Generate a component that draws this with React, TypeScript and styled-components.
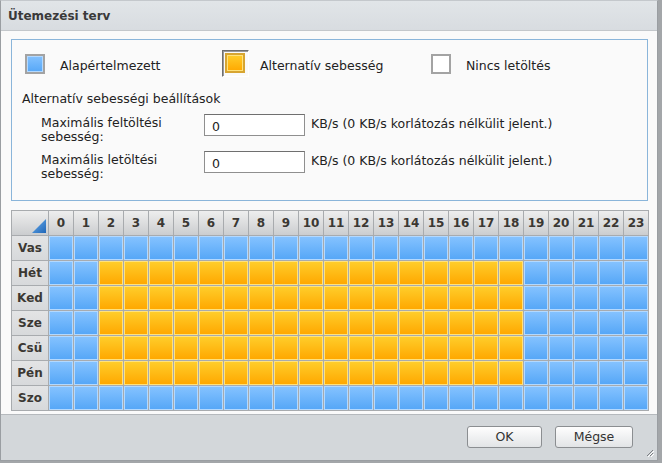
import * as React from 'react'
import styled, { createGlobalStyle } from 'styled-components'

const days = ['Vas', 'Hét', 'Ked', 'Sze', 'Csü', 'Pén', 'Szo']
const hours = Array.from({ length: 24 }, (_, i) => i)

// weekdays 2..18 use the alternative speed
const isAlt = (d: number, h: number) => d >= 1 && d <= 5 && h >= 2 && h <= 18

const GlobalStyle = createGlobalStyle`
  html, body {
    margin: 0;
    padding: 0;
    background: #a3a6a9;
  }
  body {
    font-family: "DejaVu Sans", Verdana, sans-serif;
    font-size: 12.5px;
    color: #333;
  }
  * { box-sizing: border-box; }
`

const App: React.FC = () => {
  return (
    <>
      <GlobalStyle />
      <Window>
        <TitleBar>Ütemezési terv</TitleBar>
        <Body>
          <Panel>
            <Legend>
              <LegendItem $width={200}>
                <Swatch $mode="base" />
                <LegendText>Alapértelmezett</LegendText>
              </LegendItem>
              <LegendItem $width={206}>
                <SwatchFrame>
                  <Swatch $mode="alt" />
                </SwatchFrame>
                <LegendText>Alternatív sebesség</LegendText>
              </LegendItem>
              <LegendItem>
                <Swatch $mode="none" />
                <LegendText>Nincs letöltés</LegendText>
              </LegendItem>
            </Legend>
            <SectionTitle>Alternatív sebességi beállítások</SectionTitle>
            <FormRow>
              <FieldLabel>
                Maximális feltöltési
                <br />
                sebesség:
              </FieldLabel>
              <SpeedInput defaultValue="0" />
              <Hint>KB/s (0 KB/s korlátozás nélkülit jelent.)</Hint>
            </FormRow>
            <FormRow>
              <FieldLabel>
                Maximális letöltési
                <br />
                sebesség:
              </FieldLabel>
              <SpeedInput defaultValue="0" />
              <Hint>KB/s (0 KB/s korlátozás nélkülit jelent.)</Hint>
            </FormRow>
          </Panel>
          <Schedule>
            <HeadCell $corner>
              <svg width="14" height="14" viewBox="0 0 14 14">
                <defs>
                  <linearGradient id="tri" x1="0" y1="0" x2="1" y2="1">
                    <stop offset="0" stopColor="#6fb2ee" />
                    <stop offset="1" stopColor="#1f66b8" />
                  </linearGradient>
                </defs>
                <polygon points="14,0 14,14 0,14" fill="url(#tri)" />
              </svg>
            </HeadCell>
            {hours.map((h) => (
              <HeadCell key={h}>{h}</HeadCell>
            ))}
            {days.map((d, di) => (
              <React.Fragment key={d}>
                <DayCell>{d}</DayCell>
                {hours.map((h) => (
                  <Slot key={h} $mode={isAlt(di, h) ? 'alt' : 'base'} />
                ))}
              </React.Fragment>
            ))}
          </Schedule>
        </Body>
        <Footer>
          <Button $width={75}>OK</Button>
          <Button $width={78}>Mégse</Button>
          <Grip>
            <svg width="10" height="10" viewBox="0 0 10 10">
              <path d="M9 3 L3 9 M9 6 L6 9" stroke="#7a7e82" strokeWidth="1" />
              <path d="M10 4 L4 10 M10 7 L7 10" stroke="#ffffff" strokeWidth="1" />
            </svg>
          </Grip>
        </Footer>
      </Window>
    </>
  )
}

export default App

type Mode = 'base' | 'alt' | 'none'

const fills: Record<Mode, string> = {
  base: 'linear-gradient(#84c2ff, #56a7f7)',
  alt: 'linear-gradient(#ffcd2a, #ffa800)',
  none: '#ffffff',
}

const edges: Record<Mode, string> = {
  base: '#b3d9ff',
  alt: '#ffe27c',
  none: '#ffffff',
}

const Window = styled.div`
  width: 658px;
  height: 461px;
  border: 1px solid #9a9ea2;
  border-top-color: #c4c8cc;
  display: flex;
  flex-direction: column;
  background: #fafafa;
  position: relative;
`

const TitleBar = styled.div`
  height: 30px;
  flex-shrink: 0;
  padding-left: 7px;
  display: flex;
  align-items: center;
  background: linear-gradient(#e1e5e8, #d8dce0);
  border-bottom: 1px solid #c3c7cb;
  font-weight: bold;
  font-size: 12px;
  color: #3a3a3a;
`

const Body = styled.div`
  flex: 1;
  padding: 8px 9px 0 10px;
  background: #fafafa;
`

const Panel = styled.div`
  height: 162px;
  border: 1px solid #8ab5da;
  padding: 10px 12px 0 13px;
`

const Legend = styled.div`
  display: flex;
  align-items: center;
  height: 27px;
`

const LegendItem = styled.div<{ $width?: number }>`
  display: flex;
  align-items: center;
  width: ${(p) => (p.$width ? `${p.$width}px` : 'auto')};
`

const Swatch = styled.div<{ $mode: Mode }>`
  width: 20px;
  height: 20px;
  border: 2px solid ${(p) => (p.$mode === 'alt' ? '#d7a531' : '#a3a3a3')};
  background: ${(p) => fills[p.$mode]};
  box-shadow: inset 0 0 0 1px ${(p) => edges[p.$mode]};
  flex-shrink: 0;
`

const SwatchFrame = styled.div`
  margin: -4px -4px -3px -3px;
  padding: 2px 3px 3px 2px;
  border: 1px solid;
  border-color: #6e6e6e #ffffff #ffffff #6e6e6e;
  box-shadow: inset 1px 1px 0 #9a9a9a;
`

const LegendText = styled.span`
  margin-left: 15px;
  padding-top: 4px;
  color: #222;
`

const SectionTitle = styled.div`
  margin-top: 14px;
  margin-left: -3px;
  line-height: 15px;
  color: #222;
`

const FormRow = styled.div`
  display: flex;
  align-items: flex-start;
  margin-top: 8px;
  margin-left: 16px;

  & + & {
    margin-top: 7px;
  }
`

const FieldLabel = styled.div`
  width: 163px;
  padding-top: 2px;
  line-height: 14px;
  color: #222;
`

const SpeedInput = styled.input`
  width: 101px;
  height: 22px;
  border: 1px solid #8f8f8f;
  border-top-color: #6f6f6f;
  background: #fff;
  padding: 2px 0 0 7px;
  font-family: "DejaVu Sans", Verdana, sans-serif;
  font-size: 12.5px;
  color: #222;
  outline: none;
`

const Hint = styled.span`
  margin-left: 6px;
  padding-top: 3px;
  line-height: 14px;
  color: #222;
`

const Schedule = styled.div`
  margin-top: 9px;
  width: 638px;
  display: grid;
  grid-template-columns: 36px repeat(24, 24px);
  grid-auto-rows: 24px;
  gap: 1px;
  padding: 1px;
  background: #a8abae;
`

const HeadCell = styled.div<{ $corner?: boolean }>`
  display: flex;
  align-items: ${(p) => (p.$corner ? 'flex-end' : 'center')};
  justify-content: ${(p) => (p.$corner ? 'flex-end' : 'center')};
  padding: ${(p) => (p.$corner ? '0 2px 2px 0' : '0')};
  background: linear-gradient(#eeeeee, #cbcdcf);
  font-weight: bold;
  font-size: 12px;
  color: #3b3833;
`

const DayCell = styled.div`
  display: flex;
  align-items: center;
  justify-content: center;
  background: linear-gradient(#e3e4e5, #d7d9db);
  font-weight: bold;
  font-size: 12px;
  color: #3b3833;
`

const Slot = styled.div<{ $mode: Mode }>`
  border: 1px solid ${(p) => edges[p.$mode]};
  background: ${(p) => fills[p.$mode]};
`

const Footer = styled.div`
  height: 46px;
  flex-shrink: 0;
  margin-top: 3px;
  border-top: 1px solid #b5b9bd;
  background: #d3d7da;
  display: flex;
  align-items: center;
  justify-content: flex-end;
  gap: 13px;
  padding: 0 24px 2px 0;
  position: relative;
`

const Button = styled.button<{ $width: number }>`
  width: ${(p) => p.$width}px;
  height: 22px;
  border: 1px solid #8b8e91;
  border-radius: 3px;
  background: linear-gradient(#fefefe, #e2e4e6);
  font-family: "DejaVu Sans", Verdana, sans-serif;
  font-size: 12.5px;
  color: #333;
  padding: 0;
`

const Grip = styled.div`
  position: absolute;
  right: 3px;
  bottom: 3px;
  width: 10px;
  height: 10px;
  display: flex;
`
